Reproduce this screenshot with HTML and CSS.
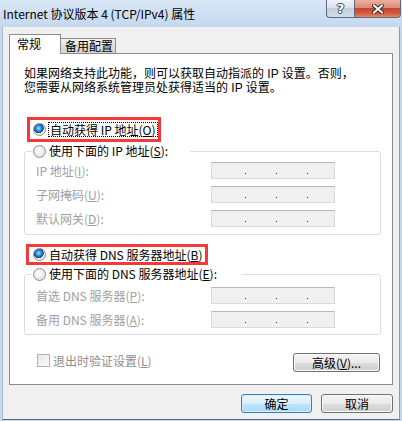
FILE: index.html
```html
<!DOCTYPE html>
<html lang="zh-CN">
  <head>
    <meta charset="UTF-8" />
    <title>Internet 协议版本 4 (TCP/IPv4) 属性</title>
    <link rel="stylesheet" href="styles.css">
  </head>
  <body>
    <div class="window">
      <div class="titlebar">
        <span class="title">Internet 协议版本 4 (TCP/IPv4) 属性</span>
        <div class="caption-btns">
          <span class="cap-btn help">?</span>
          <span class="cap-btn close">
            <svg width="12" height="10" viewBox="0 0 12 10">
              <path d="M2 1.5 L10 8.5 M10 1.5 L2 8.5" stroke="#3a2a28" stroke-width="4" stroke-linecap="square" fill="none" />
              <path d="M2 1.5 L10 8.5 M10 1.5 L2 8.5" stroke="#fff" stroke-width="2" stroke-linecap="square" fill="none" />
            </svg>
          </span>
        </div>
      </div>

      <div class="client">
        <div class="tabs">
          <span class="tab active">常规</span>
          <span class="tab">备用配置</span>
        </div>

        <div class="page">
          <p class="intro">
            如果网络支持此功能，则可以获取自动指派的 IP 设置。否则，<br />
            您需要从网络系统管理员处获得适当的 IP 设置。
          </p>

          <div class="mark mark-ip">
            <label class="opt">
              <span class="radio checked"></span>
              <span class="focus">自动获得 IP 地址(<u>O</u>)</span>
            </label>
          </div>

          <fieldset class="group group-ip">
            <legend>
              <label class="opt"><span class="radio"></span>使用下面的 IP 地址(<u>S</u>):</label>
            </legend>
            <div class="field">
              <span class="field-label">IP 地址(<u>I</u>):</span>
              <span class="ipbox"><i></i><i></i><i></i></span>
            </div>
            <div class="field">
              <span class="field-label">子网掩码(<u>U</u>):</span>
              <span class="ipbox"><i></i><i></i><i></i></span>
            </div>
            <div class="field">
              <span class="field-label">默认网关(<u>D</u>):</span>
              <span class="ipbox"><i></i><i></i><i></i></span>
            </div>
          </fieldset>

          <div class="mark mark-dns">
            <label class="opt">
              <span class="radio checked"></span>
              <span>自动获得 DNS 服务器地址(<u>B</u>)</span>
            </label>
          </div>

          <fieldset class="group group-dns">
            <legend>
              <label class="opt"><span class="radio"></span>使用下面的 DNS 服务器地址(<u>E</u>):</label>
            </legend>
            <div class="field">
              <span class="field-label">首选 DNS 服务器(<u>P</u>):</span>
              <span class="ipbox"><i></i><i></i><i></i></span>
            </div>
            <div class="field">
              <span class="field-label">备用 DNS 服务器(<u>A</u>):</span>
              <span class="ipbox"><i></i><i></i><i></i></span>
            </div>
          </fieldset>

          <div class="footer-row">
            <label class="check"><span class="box"></span>退出时验证设置(<u>L</u>)</label>
            <button class="btn adv">高级(<u>V</u>)...</button>
          </div>
        </div>

        <div class="actions">
          <button class="btn default">确定</button>
          <button class="btn cancel">取消</button>
        </div>
      </div>
    </div>
  </body>
</html>
```

FILE: styles.css
```css
* {
  box-sizing: border-box;
}

body {
  margin: 0;
  font-family: "Noto Sans CJK SC", "Noto Sans", sans-serif;
  font-size: 12px;
  color: #000;
}

.window {
  width: 402px;
  height: 421px;
  display: flex;
  flex-direction: column;
  background: #c4d8ee;
  overflow: hidden;
}

/* title bar */
.titlebar {
  height: 27px;
  flex: none;
  display: flex;
  justify-content: space-between;
  align-items: flex-start;
  padding-right: 1px;
  background: linear-gradient(#d9e7f6, #c4d8ee);
}
.title {
  padding: 6px 0 0 3px;
  line-height: 15px;
  color: #000;
}
.caption-btns {
  display: flex;
}
.cap-btn {
  height: 18px;
  display: flex;
  align-items: center;
  justify-content: center;
  border: 1px solid #5d6b7c;
  border-top: none;
}
.help {
  width: 28px;
  border-right: none;
  border-bottom-left-radius: 4px;
  background: linear-gradient(#eef3f8, #dbe4ee 45%, #c3d0dd 50%, #d2dde8);
  color: #fff;
  font-family: "DejaVu Sans", sans-serif;
  font-weight: bold;
  font-size: 13px;
  text-shadow: 1px 0 #3b4756, -1px 0 #3b4756, 0 1px #3b4756, 0 -1px #3b4756;
}
.close {
  width: 47px;
  border-bottom-right-radius: 4px;
  background: linear-gradient(#ebb0a2, #dc8b78 45%, #c7442c 50%, #d35b3e 80%, #e38a6a);
}

/* dialog client area */
.client {
  flex: 1;
  margin: 0 2px 1px 2px;
  padding: 7px 6px 0 6px;
  background: #f0f0f0;
  border-left: 1px solid #a9bccf;
  border-right: 1px solid #8d9aa8;
  border-bottom: 1px solid #5a6a7b;
}

.tabs {
  height: 19px;
  display: flex;
  align-items: flex-end;
}
.tab {
  border: 1px solid #898c95;
  border-bottom: none;
}
.tab.active {
  position: relative;
  z-index: 1;
  width: 52px;
  height: 20px;
  margin-bottom: -1px;
  padding-left: 7px;
  line-height: 18px;
  background: #fff;
}
.tab:not(.active) {
  width: 56px;
  height: 15px;
  margin-left: -1px;
  padding-left: 4px;
  line-height: 14px;
  background: linear-gradient(#f0f0f0, #e4e4e4 50%, #dadada 51%, #d6d6d6);
}

.page {
  height: 332px;
  border: 1px solid #898c95;
  background: #fff;
}

.intro {
  margin: 13px 0 0 14px;
  font-family: "Liberation Sans", "Noto Sans CJK SC", sans-serif;
  line-height: 14px;
}

/* red annotation boxes */
.mark {
  display: flex;
  width: max-content;
  border: 3px solid #f5393b;
}
.mark-ip {
  margin: 22px 0 0 17px;
  height: 25px;
  padding-left: 3px;
}
.mark-dns {
  margin: 9px 0 0 16px;
  height: 21px;
  padding: 0 3px 0 4px;
}

.opt {
  display: flex;
  align-items: center;
  line-height: 16px;
}
.radio {
  width: 13px;
  height: 13px;
  margin-right: 3px;
  border-radius: 50%;
  border: 1px solid #8f8f8f;
  background: radial-gradient(circle at 45% 40%, #fafafa 20%, #e2e2e2 70%, #cfcfcf);
  flex: none;
}
.radio.checked {
  background: radial-gradient(circle at 42% 38%, #a9dcff 0, #3f99dc 25%, #125c9d 45%, #0c3f6d 52%, #f2f2f2 56%, #d8d8d8 100%);
}
.mark-ip .radio {
  margin-right: 2px;
}
.focus {
  border: 1px dotted #000;
  padding: 0 1px;
  line-height: 13px;
}

/* group boxes */
.group {
  width: 357px;
  margin: 1px 0 0 14px;
  padding: 0 0 7px 0;
  border: 1px solid #d5dfe5;
  border-radius: 3px;
}
.group legend {
  margin-left: 7px;
  padding: 0 22px 0 1px;
}
.group-dns legend {
  padding-right: 25px;
}
.group-dns {
  padding-bottom: 6px;
}

.field {
  display: flex;
  align-items: center;
  height: 17px;
  margin-top: 7px;
  padding-left: 11px;
  color: #a0a0a0;
}
.group-ip .field:first-of-type {
  margin-top: 3px;
}
.group-dns .field:first-of-type {
  margin-top: 5px;
}
.field-label {
  width: 175px;
}
.ipbox {
  width: 124px;
  height: 17px;
  display: flex;
  align-items: flex-end;
  gap: 30px;
  padding: 0 0 4px 33px;
  background: #f0f0f0;
  border: 1px solid #d9d9d9;
  border-top-color: #b9b9b9;
}
.ipbox i {
  width: 1px;
  height: 1px;
  background: #333;
}

.footer-row {
  display: flex;
  justify-content: space-between;
  align-items: flex-start;
  margin: 18px 12px 0 0;
  padding-left: 27px;
}
.check {
  display: flex;
  align-items: center;
  margin-top: 1px;
  line-height: 13px;
  color: #8d8d8d;
}
.check .box {
  width: 13px;
  height: 13px;
  margin-right: 3px;
  border: 1px solid #b1b1b1;
  background: linear-gradient(135deg, #e6e6e6, #fafafa);
}

/* push buttons */
.btn {
  height: 19px;
  padding: 0;
  font: inherit;
  line-height: 16px;
  color: #000;
  border: 1px solid #707070;
  border-radius: 3px;
  background: linear-gradient(#f2f2f2, #ebebeb 50%, #dddddd 51%, #cfcfcf);
  box-shadow: inset 0 0 0 1px #fbfbfb;
}
.btn.adv {
  width: 87px;
}
.btn.default {
  border-color: #3c7fb1;
  background: linear-gradient(#eaf6fd, #d9f0fc 50%, #bee6fd 51%, #a7d9f5);
  box-shadow: inset 0 0 0 1px #d3ecfa;
}

.actions {
  display: flex;
  justify-content: flex-end;
  gap: 9px;
  margin-top: 9px;
}
.btn.default {
  width: 71px;
}
.btn.cancel {
  width: 72px;
}
```
